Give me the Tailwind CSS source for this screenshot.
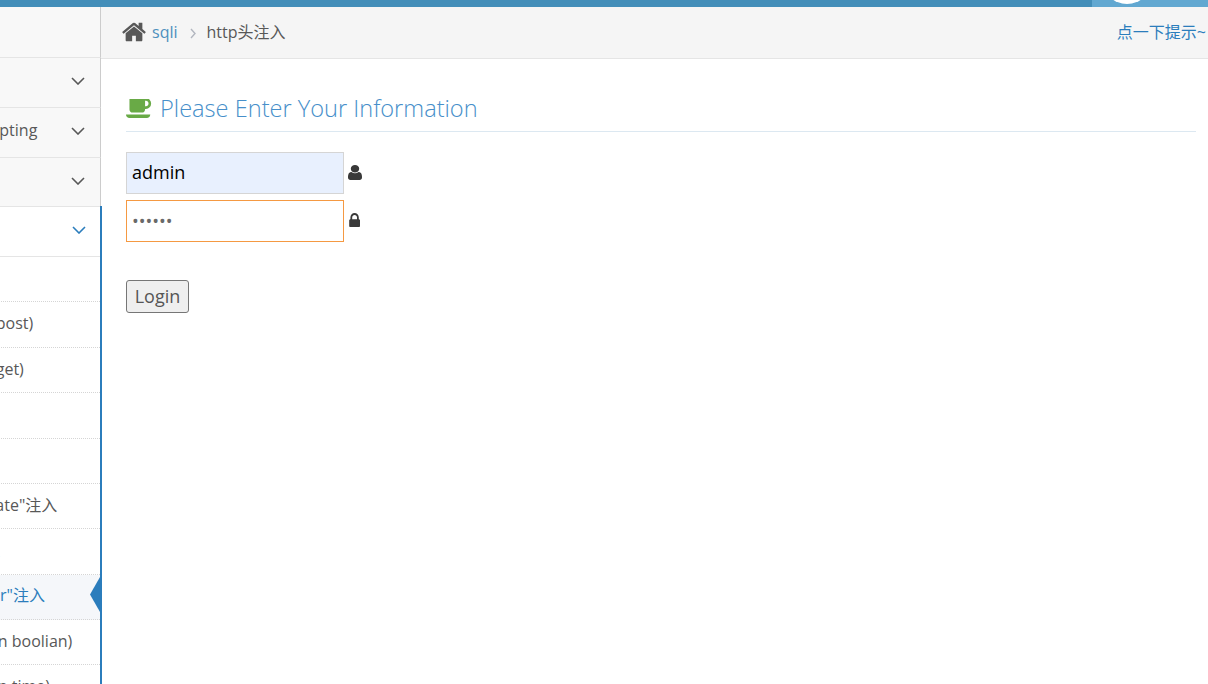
<!DOCTYPE html>
<html lang="en">
<head>
    <meta charset="UTF-8">
    <title>http头注入</title>
    <script src="https://cdn.jsdelivr.net/npm/@tailwindcss/browser@4"></script>
</head>
<body class="h-[684px] overflow-hidden bg-white font-['Open_Sans','Noto_Sans_CJK_SC',sans-serif] text-[16px] text-[#585858]">
    <!-- top bar -->
    <div class="flex h-[7px] justify-end overflow-hidden bg-[#438eb9]">
        <div class="relative w-[116px] bg-[#62a8d1]">
            <div class="absolute left-[10px] top-[-46px] h-[50px] w-[50px] rounded-full bg-white"></div>
        </div>
    </div>
    <div class="flex h-[677px]">
        <!-- sidebar, page is scrolled to the right so its left part is cut off -->
        <div class="relative z-10 ml-[-125px] w-[226px] shrink-0 bg-[#f8f8f8]">
            <div class="h-[50px] border-r border-[#ccc]"></div>
            <div class="flex h-[50px] items-center justify-between border-r border-t border-r-[#ccc] border-t-[#e5e5e5] pb-[4px] pl-[19px] pr-[15px]">
                <span>概览</span>
                <svg class="h-[8px] w-[14px]" viewBox="0 0 14 8" fill="none" stroke="#585858" stroke-width="1.6"><path d="M1 1l6 6 6-6"/></svg>
            </div>
            <div class="flex h-[50px] items-center justify-between border-r border-t border-r-[#ccc] border-t-[#e5e5e5] pb-[4px] pl-[19px] pr-[15px]">
                <span class="-mt-[2px] whitespace-nowrap">Cross-Site Scripting</span>
                <svg class="h-[8px] w-[14px]" viewBox="0 0 14 8" fill="none" stroke="#585858" stroke-width="1.6"><path d="M1 1l6 6 6-6"/></svg>
            </div>
            <div class="flex h-[49px] items-center justify-between border-r border-t border-r-[#ccc] border-t-[#e5e5e5] pb-[2px] pl-[19px] pr-[15px]">
                <span>CSRF</span>
                <svg class="h-[8px] w-[14px]" viewBox="0 0 14 8" fill="none" stroke="#585858" stroke-width="1.6"><path d="M1 1l6 6 6-6"/></svg>
            </div>
            <div class="mr-[-1px] h-[478px] border-r-2 border-[#2b7dbc] bg-white">
                <div class="flex h-[51px] items-center justify-between border-y border-[#e5e5e5] pb-[4px] pl-[19px] pr-[14px] text-[#2b7dbc]">
                    <span>SQL-Inject</span>
                    <svg class="h-[8px] w-[14px]" viewBox="0 0 14 8" fill="none" stroke="#2b7dbc" stroke-width="1.6"><path d="M1 1l6 6 6-6"/></svg>
                </div>
                <div class="flex h-[45px] items-center whitespace-nowrap border-b border-dotted border-[#d5d5d5] pb-[4px] pl-[37px]">概述</div>
                <div class="flex h-[46px] items-center whitespace-nowrap border-b border-dotted border-[#d5d5d5] pb-[4px] pl-[36px]">数字型注入(post)</div>
                <div class="flex h-[45px] items-center whitespace-nowrap border-b border-dotted border-[#d5d5d5] pb-[2px] pl-[36px]">字符型注入(get)</div>
                <div class="flex h-[46px] items-center whitespace-nowrap border-b border-dotted border-[#d5d5d5] pb-[4px] pl-[37px]">搜索型注入</div>
                <div class="flex h-[45px] items-center whitespace-nowrap border-b border-dotted border-[#d5d5d5] pb-[4px] pl-[37px]">xx型注入</div>
                <div class="flex h-[45px] items-center whitespace-nowrap border-b border-dotted border-[#d5d5d5] pb-[2px] pl-[36px]">"insert/update"注入</div>
                <div class="flex h-[46px] items-center whitespace-nowrap border-b border-dotted border-[#d5d5d5] pb-[4px] pl-[34px]">"delete"注入</div>
                <div class="relative flex h-[45px] items-center whitespace-nowrap border-b border-dotted border-[#d5d5d5] bg-[#f5f7fa] pb-[4px] pl-[37px] text-[#2b7dbc]">
                    "http header"注入
                    <div class="absolute right-0 top-[2px] h-[35px] w-[10px] bg-[#2b7dbc] [clip-path:polygon(100%_0,100%_100%,0_50%)]"></div>
                </div>
                <div class="flex h-[45px] items-center whitespace-nowrap border-b border-dotted border-[#d5d5d5] pb-[2px] pl-[37px]">盲注(base on boolian)</div>
                <div class="flex h-[45px] items-center whitespace-nowrap pb-[4px] pl-[37px]">盲注(base on time)</div>
            </div>
        </div>
        <!-- main -->
        <div class="min-w-0 flex-1">
            <div class="flex h-[52px] items-center justify-between border-b border-[#e5e5e5] bg-[#f5f5f5] pb-[2px] pl-[20px] pr-[2px]">
                <div class="flex items-center">
                    <svg class="h-[26px] w-[26px]" viewBox="0 0 1792 1792" fill="#585858"><path d="M1472 992v480q0 26-19 45t-45 19h-384v-384h-256v384h-384q-26 0-45-19t-19-45v-480q0-1 .5-3t.5-3l575-474 575 474q1 2 1 6zm223-69l-62 74q-8 9-21 11h-3q-13 0-21-7l-692-577-692 577q-12 8-24 7-13-2-21-11l-62-74q-8-10-7-23.500t11-21.500l719-599q32-26 76-26t76 26l244 204v-195q0-14 9-23t23-9h192q14 0 23 9t9 23v408l219 182q10 8 11 21.500t-7 23.500z"/></svg>
                    <span class="ml-[5px] text-[#4c8fbd]">sqli</span>
                    <svg class="ml-[12px] mr-[11px] mt-[4px] h-[11px] w-[6px]" viewBox="0 0 6 11" fill="none" stroke="#b2b6bf" stroke-width="1.4"><path d="M1 1l4 4.500-4 4.500"/></svg>
                    <span>http头注入</span>
                </div>
                <span class="text-[#2b7dbc]">点一下提示~</span>
            </div>
            <div class="pl-[25px] pr-[12px]">
                <div class="mt-[31px] flex h-[42px] items-center border-b border-[#dce8f1] pb-[4px] text-[23.6px] font-light text-[#478fca]">
                    <svg class="h-[19px] w-[26px]" viewBox="-64 320 1920 1344" preserveAspectRatio="none" fill="#69aa46"><path d="M1600 640q0-80-56-136t-136-56h-64v384h64q80 0 136-56t56-136zm-1664 768h1792q0 106-75 181t-181 75h-1280q-106 0-181-75t-75-181zm1856-768q0 159-112.500 271.500t-271.500 112.500h-64v32q0 92-66 158t-158 66h-704q-92 0-158-66t-66-158v-736q0-26 19-45t45-19h1152q159 0 271.500 112.500t112.500 271.500z"/></svg>
                    <span class="ml-[8px]">Please Enter Your Information</span>
                </div>
                <div class="mt-[20px] flex items-center">
                    <input type="text" value="admin" class="h-[42px] w-[218px] border border-[#d5d5d5] bg-[#e8f0fe] px-[5px] pb-[2px] text-[18px] text-black">
                    <svg class="mb-[2px] ml-[4px] h-[15px] w-[14px]" viewBox="256 128 1280 1536" preserveAspectRatio="none" fill="#393939"><path d="M1536 1399q0 109-62.500 187t-150.500 78h-854q-88 0-150.500-78t-62.500-187q0-85 8.500-160.500t31.500-152 58.500-131 94-89 134.500-34.500q131 128 313 128t313-128q76 0 134.500 34.500t94 89 58.500 131 31.500 152 8.500 160.500zm-256-887q0 159-112.500 271.500t-271.500 112.500-271.500-112.500-112.500-271.500 112.500-271.500 271.500-112.500 271.500 112.500 112.500 271.500z"/></svg>
                </div>
                <div class="mt-[6px] flex items-center">
                    <input type="password" value="123456" class="h-[42px] w-[218px] border border-[#f59942] bg-white px-[5px] text-[18px] text-[#696969]">
                    <svg class="mb-[2px] ml-[4px] h-[14px] w-[12px]" viewBox="192 128 1280 1408" preserveAspectRatio="none" fill="#393939"><path d="M640 768h512v-192q0-106-75-181t-181-75-181 75-75 181v192zm832 96v576q0 40-28 68t-68 28h-960q-40 0-68-28t-28-68v-576q0-40 28-68t68-28h32v-192q0-184 132-316t316-132 316 132 132 316v192h32q40 0 68 28t28 68z"/></svg>
                </div>
                <button class="mt-[38px] h-[33px] w-[63px] rounded-[3px] border border-[#767676] bg-[#efefef] text-[18px] text-[#555]">Login</button>
            </div>
        </div>
    </div>
</body>
</html>
